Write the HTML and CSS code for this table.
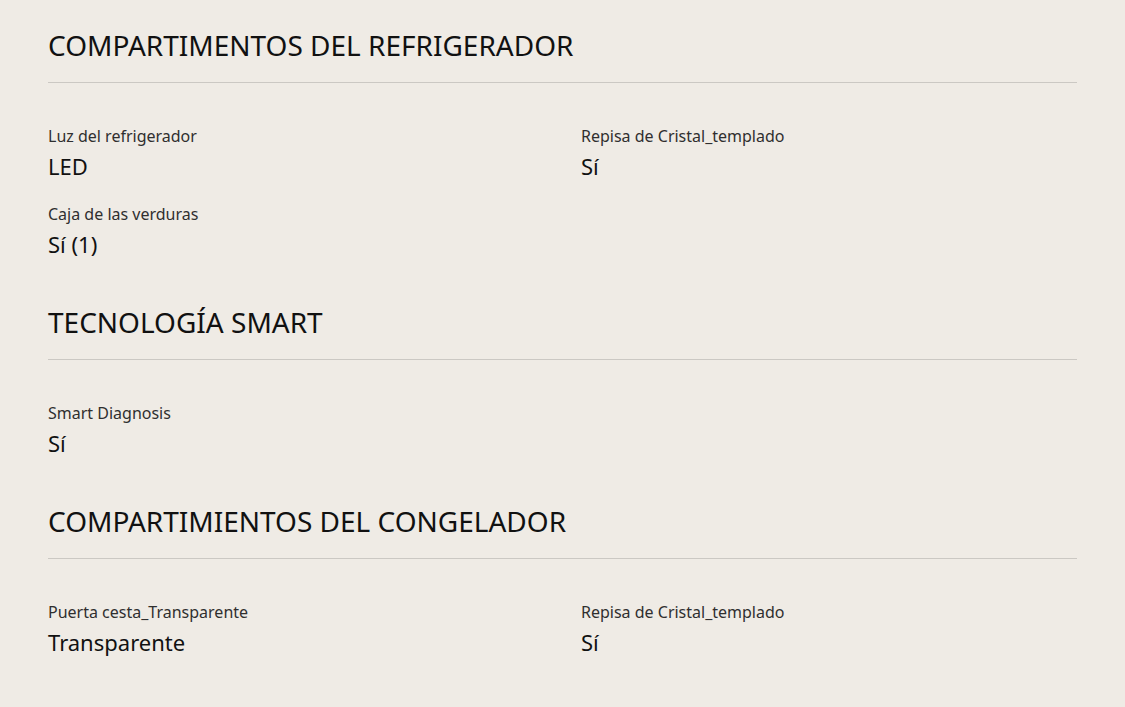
FILE: index.html
```html
<!DOCTYPE html>
<html lang="es">
<head>
  <meta charset="UTF-8">
  <title>Especificaciones</title>
  <link rel="stylesheet" href="styles.css">
</head>
<body>

<div class="specs">

  <!-- REFRIGERADOR -->
  <section class="spec-group">
    <h2 class="spec-title">COMPARTIMENTOS DEL REFRIGERADOR</h2>
    <ul class="spec-list">
      <li class="spec-item">
        <p class="spec-label">Luz del refrigerador</p>
        <p class="spec-value">LED</p>
      </li>
      <li class="spec-item">
        <p class="spec-label">Repisa de Cristal_templado</p>
        <p class="spec-value">Sí</p>
      </li>
      <li class="spec-item">
        <p class="spec-label">Caja de las verduras</p>
        <p class="spec-value">Sí (1)</p>
      </li>
    </ul>
  </section>

  <!-- SMART -->
  <section class="spec-group">
    <h2 class="spec-title">TECNOLOGÍA SMART</h2>
    <ul class="spec-list">
      <li class="spec-item">
        <p class="spec-label">Smart Diagnosis</p>
        <p class="spec-value">Sí</p>
      </li>
    </ul>
  </section>

  <!-- CONGELADOR -->
  <section class="spec-group">
    <h2 class="spec-title">COMPARTIMIENTOS DEL CONGELADOR</h2>
    <ul class="spec-list">
      <li class="spec-item">
        <p class="spec-label">Puerta cesta_Transparente</p>
        <p class="spec-value">Transparente</p>
      </li>
      <li class="spec-item">
        <p class="spec-label">Repisa de Cristal_templado</p>
        <p class="spec-value">Sí</p>
      </li>
    </ul>
  </section>

</div>

</body>
</html>
```

FILE: styles.css
```css
* { margin: 0; padding: 0; box-sizing: border-box; }

body {
  font-family: "Noto Sans", "Open Sans", sans-serif;
  background-color: #efebe5;
  color: #111;
  overflow: hidden;
}

.specs {
  padding: 27px 48px 0;
}

.spec-group {
  margin-bottom: 24px;
}

.spec-title {
  font-size: 28px;
  font-weight: 400;
  line-height: 36px;
  padding-bottom: 19px;
  border-bottom: 1px solid #cbc8c3;
  color: #111;
}

.spec-list {
  list-style: none;
  display: grid;
  grid-template-columns: 1fr 1fr;
  column-gap: 37px;
  padding-top: 41px;
}

.spec-item {
  margin-bottom: 20px;
}

.spec-label {
  font-size: 16px;
  line-height: 24px;
  color: #2f2f2f;
  margin-bottom: 2px;
}

.spec-value {
  font-size: 22px;
  line-height: 32px;
  color: #111;
}
```
